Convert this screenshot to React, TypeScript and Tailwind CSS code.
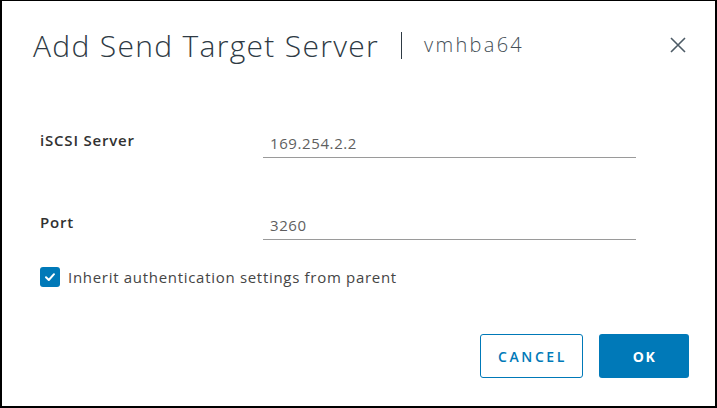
import React from 'react';

const font = { fontFamily: '"Open Sans", Lato, sans-serif' };

const Field: React.FC<{ label: string; value: string }> = ({ label, value }) => (
  <div className="flex items-end h-[31px]">
    <div className="w-[223px] pb-[7px] text-[15px] font-semibold tracking-[0.8px] text-[#313131]">{label}</div>
    <div className="w-[373px] h-full border-b border-[#9a9a9a] pl-[7px] flex items-center pt-[2px] text-[15px] tracking-[0.6px] text-[#5f5f5f]">
      {value}
    </div>
  </div>
);

const App: React.FC = () => {
  return (
    <div
      className="w-[717px] h-[408px] bg-white border-black border-l-2 border-r-2 border-b-2 border-t flex flex-col"
      style={font}
    >
      <div className="mt-[24px] h-[40px] flex items-center pl-[31px] pr-[28px]">
        <h1 className="text-[30px] font-light tracking-[1.3px] text-[#2e3a44]">Add Send Target Server</h1>
        <div className="ml-[22px] mr-[22px] w-px h-[27px] bg-[#2e3a44]" />
        <span className="text-[20px] font-light tracking-[2.3px] text-[#454f57]">vmhba64</span>
        <button className="ml-auto w-[18px] h-[18px] text-[#4d5b66]">
          <svg viewBox="0 0 18 18" className="w-[18px] h-[18px]" fill="none" stroke="currentColor" strokeWidth="1.6">
            <path d="M2 2 L16 16 M16 2 L2 16" />
          </svg>
        </button>
      </div>

      <div className="mt-[62px] pl-[38px] flex flex-col">
        <Field label="iSCSI Server" value="169.254.2.2" />
        <div className="h-[51px]" />
        <Field label="Port" value="3260" />
        <label className="mt-[26px] flex items-center gap-[8px] text-[15px] tracking-[0.7px] text-[#454545]">
          <span className="w-[20px] h-[20px] rounded-[3px] bg-[#0079b8] flex items-center justify-center">
            <svg viewBox="0 0 12 12" className="w-[12px] h-[12px]" fill="none" stroke="white" strokeWidth="2" strokeLinecap="round" strokeLinejoin="round">
              <path d="M2 6.3 L4.8 9 L10 3.2" />
            </svg>
          </span>
          Inherit authentication settings from parent
        </label>
      </div>

      <div className="mt-auto mb-[28px] pr-[26px] flex justify-end gap-[16px]">
        <button className="w-[103px] h-[44px] rounded-[3px] border border-[#0079b8] text-[#0079b8] text-[14px] font-semibold tracking-[2.6px] pl-[2px]">
          CANCEL
        </button>
        <button className="w-[90px] h-[44px] rounded-[3px] bg-[#0079b8] text-white text-[14px] font-bold tracking-[1.6px] pl-[1px]">
          OK
        </button>
      </div>
    </div>
  );
};

export default App;
